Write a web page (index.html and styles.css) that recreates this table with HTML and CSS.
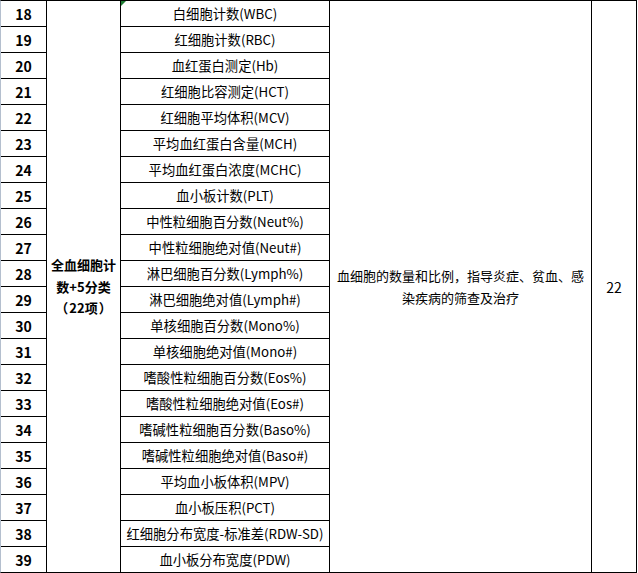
FILE: index.html
```html
<!DOCTYPE html>
<html lang="zh">
<head>
<meta charset="utf-8">
<link rel="stylesheet" href="styles.css">
</head>
<body>
<div class="sheet">
  <div class="cat"><p class="cat-text">全血细胞计<br>数+5分类<br><span class="po">（</span>22项<span class="pc">）</span></p></div>
  <div class="desc">血细胞的数量和比例，指导炎症、贫血、感<br>染疾病的筛查及治疗</div>
  <div class="count">22</div>

  <div class="num">18</div><div class="item first">白细胞计数(WBC)<span class="tri"></span></div>
  <div class="num">19</div><div class="item">红细胞计数(RBC)</div>
  <div class="num">20</div><div class="item">血红蛋白测定(Hb)</div>
  <div class="num">21</div><div class="item">红细胞比容测定(HCT)</div>
  <div class="num">22</div><div class="item">红细胞平均体积(MCV)</div>
  <div class="num">23</div><div class="item">平均血红蛋白含量(MCH)</div>
  <div class="num">24</div><div class="item">平均血红蛋白浓度(MCHC)</div>
  <div class="num">25</div><div class="item">血小板计数(PLT)</div>
  <div class="num">26</div><div class="item">中性粒细胞百分数(Neut%)</div>
  <div class="num">27</div><div class="item">中性粒细胞绝对值(Neut#)</div>
  <div class="num">28</div><div class="item">淋巴细胞百分数(Lymph%)</div>
  <div class="num">29</div><div class="item">淋巴细胞绝对值(Lymph#)</div>
  <div class="num">30</div><div class="item">单核细胞百分数(Mono%)</div>
  <div class="num">31</div><div class="item">单核细胞绝对值(Mono#)</div>
  <div class="num">32</div><div class="item">嗜酸性粒细胞百分数(Eos%)</div>
  <div class="num">33</div><div class="item">嗜酸性粒细胞绝对值(Eos#)</div>
  <div class="num">34</div><div class="item">嗜碱性粒细胞百分数(Baso%)</div>
  <div class="num">35</div><div class="item">嗜碱性粒细胞绝对值(Baso#)</div>
  <div class="num">36</div><div class="item">平均血小板体积(MPV)</div>
  <div class="num">37</div><div class="item">血小板压积(PCT)</div>
  <div class="num">38</div><div class="item">红细胞分布宽度-标准差(RDW-SD)</div>
  <div class="num">39</div><div class="item">血小板分布宽度(PDW)</div>
</div>
</body>
</html>
```
FILE: styles.css
```css
html, body {
  margin: 0;
  padding: 0;
  background: #fff;
}

.sheet {
  display: grid;
  grid-template-columns: 45px 73px 208px 261px 44px;
  grid-auto-rows: 25px;
  gap: 1px;
  width: fit-content;
  background: #000;
  border: 1px solid #000;
  border-left-color: #b4bfce;
  font-family: "Noto Sans CJK SC", "Noto Sans", sans-serif;
  color: #000;
  text-spacing-trim: space-all;
}

.sheet > div {
  background: #fff;
  display: flex;
  align-items: center;
  justify-content: center;
  text-align: center;
  white-space: nowrap;
}

.num {
  grid-column: 1;
  font-weight: bold;
  font-size: 14px;
}

.item {
  grid-column: 3;
  font-size: 13.3px;
}

.first {
  position: relative;
}

.tri {
  position: absolute;
  left: 0;
  top: 0;
  width: 0;
  height: 0;
  border-top: 5px solid #1e7b32;
  border-right: 5px solid transparent;
}

.cat {
  grid-column: 2;
  grid-row: 1 / span 22;
  font-weight: bold;
  font-size: 13px;
  line-height: 21.5px;
}

.cat-text {
  margin: 0;
}

.po,
.pc {
  display: inline-block;
  width: 14px;
}

.po {
  text-align: left;
}

.pc {
  text-align: right;
}

.desc {
  grid-column: 4;
  grid-row: 1 / span 22;
  font-size: 13px;
  line-height: 22px;
}

.count {
  grid-column: 5;
  grid-row: 1 / span 22;
  font-size: 14px;
}
```
